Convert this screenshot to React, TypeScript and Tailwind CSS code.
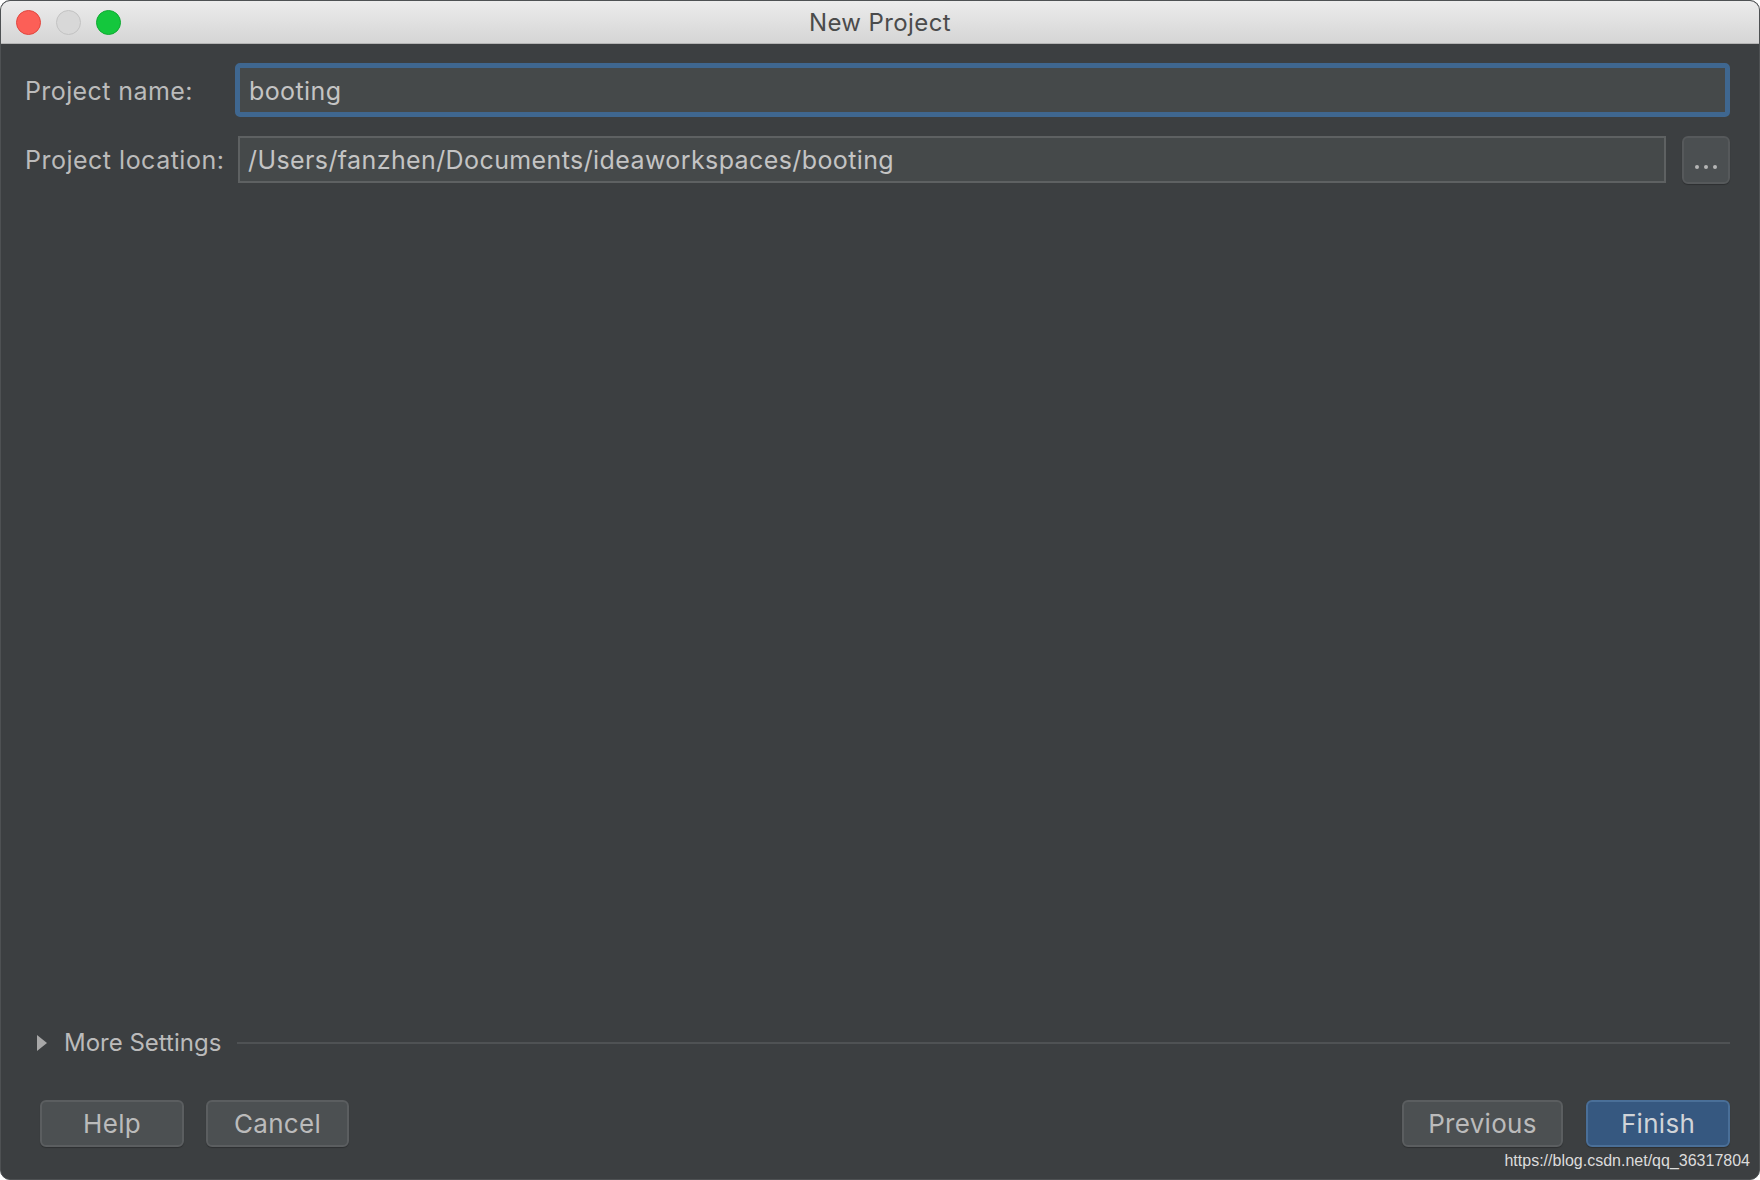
import React from "react";

const font = { fontFamily: "Inter, 'Noto Sans', 'Liberation Sans', sans-serif" };

function Button({ label, primary, width }: { label: string; primary?: boolean; width: string }) {
  return (
    <button
      className={
        primary
          ? `${width} h-[47px] rounded-[6px] border-2 border-[#4a6f98] bg-[#365880] text-[26px] text-[#d0d4d8] tracking-[0.3px] shadow-[0_1px_1px_rgba(0,0,0,0.25)]`
          : `${width} h-[47px] rounded-[6px] border-2 border-[#5b5e60] bg-[#4c5052] text-[26px] text-[#bbbbbb] tracking-[0.3px] shadow-[0_1px_1px_rgba(0,0,0,0.25)]`
      }
    >
      {label}
    </button>
  );
}

export default function App() {
  return (
    <div className="w-[1760px] h-[1180px] bg-white" style={font}>
      <div className="relative w-full h-full rounded-[10px] overflow-hidden flex flex-col bg-[#3c3f41] border border-[#4e5153]">
        {/* title bar */}
        <div className="relative h-[43px] shrink-0 flex items-center justify-center bg-gradient-to-b from-[#ececec] to-[#d5d5d5] border-b border-[#b4b4b4]">
          <div className="absolute left-[15px] top-[9px] flex gap-[15px]">
            <span className="w-[25px] h-[25px] rounded-full bg-[#fc5f57] border border-[#e0463f]" />
            <span className="w-[25px] h-[25px] rounded-full bg-[#d8d8d8] border border-[#c2c2c2]" />
            <span className="w-[25px] h-[25px] rounded-full bg-[#14c73d] border border-[#10a933]" />
          </div>
          <span className="text-[24px] text-[#4b4b4b] tracking-[0.4px] pt-[2px]">New Project</span>
        </div>

        {/* content */}
        <div className="flex-1 flex flex-col pl-[24px] pr-[29px] pt-[19px] pb-[32px] text-[#bbbbbb] text-[25px] tracking-[0.4px]">
          <div className="flex items-center h-[54px]">
            <span className="w-[210px] shrink-0 pt-[3px]">Project name:</span>
            <div className="flex-1 h-[54px] rounded-[5px] border-[5px] border-[#3f6790] bg-[#45494a] flex items-center pl-[9px] pt-[3px] text-[#c4c4c4]">
              booting
            </div>
          </div>

          <div className="flex items-center h-[47px] mt-[19px]">
            <span className="w-[213px] shrink-0 pt-[3px] tracking-[0.5px]">Project location:</span>
            <div className="flex-1 h-[47px] border-2 border-[#5e6162] bg-[#45494a] flex items-center pl-[8px] pt-[3px] text-[#c4c4c4]">
              /Users/fanzhen/Documents/ideaworkspaces/booting
            </div>
            <button className="ml-[16px] w-[48px] h-[48px] rounded-[6px] border-2 border-[#56595b] bg-[#4b4f51] flex items-center justify-center gap-[5px] pt-[14px] shadow-[0_1px_1px_rgba(0,0,0,0.25)]">
              <span className="w-[4px] h-[4px] rounded-full bg-[#b5b5b5]" />
              <span className="w-[4px] h-[4px] rounded-full bg-[#b5b5b5]" />
              <span className="w-[4px] h-[4px] rounded-full bg-[#b5b5b5]" />
            </button>
          </div>

          <div className="flex-1" />

          <div className="flex items-center h-[30px]">
            <svg width="10" height="16" viewBox="0 0 10 16" className="ml-[12px]">
              <path d="M0 0 L10 8 L0 16 Z" fill="#a8a8a8" />
            </svg>
            <span className="ml-[17px] text-[24px] tracking-[0px]">More Settings</span>
            <div className="flex-1 ml-[16px] h-[2px] bg-[#4f5254]" />
          </div>

          <div className="flex items-center justify-between mt-[42px] pl-[15px]">
            <div className="flex gap-[22px]">
              <Button label="Help" width="w-[144px]" />
              <Button label="Cancel" width="w-[143px]" />
            </div>
            <div className="flex gap-[23px]">
              <Button label="Previous" width="w-[161px]" />
              <Button label="Finish" width="w-[144px]" primary />
            </div>
          </div>
        </div>

        <span
          className="absolute right-[9px] bottom-[10px] text-[16px] text-[#dcdcdc] leading-none"
          style={{ fontFamily: "'Liberation Sans', Arial, sans-serif" }}
        >
          https://blog.csdn.net/qq_36317804
        </span>
      </div>
    </div>
  );
}
